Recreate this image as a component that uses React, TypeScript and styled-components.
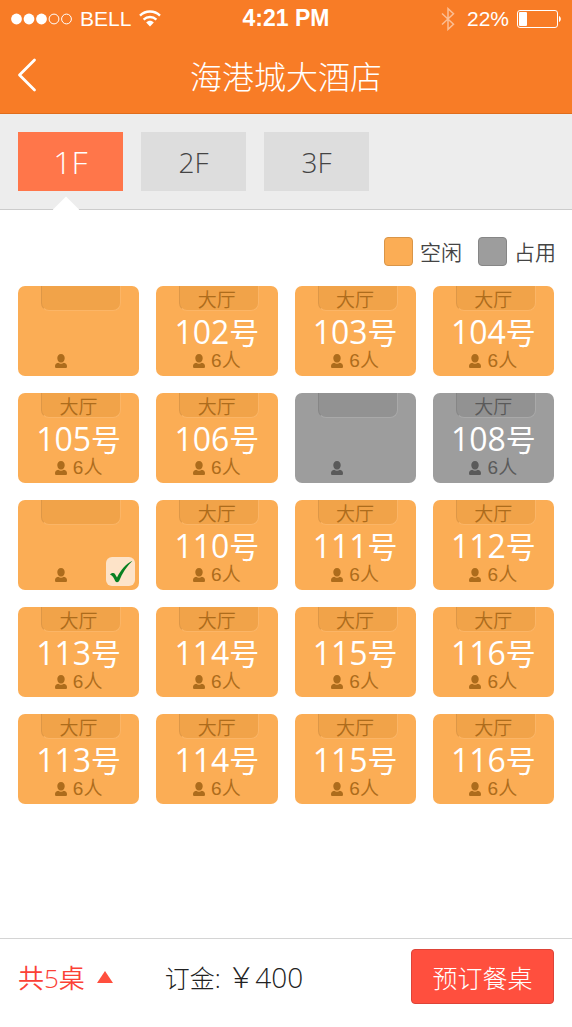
import React, { useState } from 'react';
import styled, { createGlobalStyle } from 'styled-components';

const GlobalStyle = createGlobalStyle`
  * { box-sizing: border-box; }
  body {
    margin: 0;
    background: #fff;
    color: #444;
    font-family: "Open Sans", "Noto Sans CJK SC", sans-serif;
    font-weight: 350;
  }
  button {
    margin: 0;
    padding: 0;
    border: 0;
    background: none;
    color: inherit;
    font: inherit;
    cursor: pointer;
  }
`;

const Page = styled.div`
  display: flex;
  flex-direction: column;
  min-height: 100vh;
`;

const Header = styled.header`
  background: #f87c26;
  border-bottom: 1px solid #e06d1c;
  color: #fff;
`;

const StatusBar = styled.div`
  display: grid;
  grid-template-columns: 1fr auto 1fr;
  align-items: center;
  height: 37px;
  padding: 0 11px;
  font-family: "Liberation Sans", sans-serif;
  font-size: 21px;
`;

const StatusGroup = styled.div<{ $end?: boolean }>`
  display: flex;
  align-items: center;
  justify-content: ${(p) => (p.$end ? 'flex-end' : 'flex-start')};
  gap: 8px;
`;

const Clock = styled.time`
  font-size: 23px;
  font-weight: 700;
`;

const TitleBar = styled.div`
  display: grid;
  grid-template-columns: 54px 1fr 54px;
  align-items: center;
  height: 76px;
`;

const BackButton = styled.button`
  display: flex;
  align-items: center;
  height: 76px;
  padding-left: 17px;
`;

const Title = styled.h1`
  margin: 0;
  text-align: center;
  font-family: "Noto Sans CJK SC", sans-serif;
  font-size: 32px;
  font-weight: 300;
  line-height: 40px;
`;

const Floors = styled.div`
  display: flex;
  gap: 18px;
  padding: 18px;
  background: #ededed;
  border-bottom: 1px solid #ccc;
`;

const FloorTab = styled.button<{ $active: boolean }>`
  position: relative;
  width: 105px;
  height: 59px;
  background: ${(p) => (p.$active ? '#ff764a' : '#dddddd')};
  color: ${(p) => (p.$active ? '#fff' : '#444')};
  font-size: ${(p) => (p.$active ? 32 : 28)}px;
  font-weight: 300;
`;

const Pointer = styled.svg`
  position: absolute;
  left: 35px;
  bottom: -19px;
`;

const Main = styled.main`
  flex: 1;
`;

const Legend = styled.div`
  display: flex;
  justify-content: flex-end;
  gap: 16px;
  padding: 27px 16px 20px;
`;

const LegendItem = styled.div`
  display: flex;
  align-items: center;
  gap: 7px;
  font-family: "Noto Sans CJK SC", sans-serif;
  font-size: 21px;
  line-height: 29px;
`;

const Swatch = styled.span<{ $busy?: boolean }>`
  width: 29px;
  height: 29px;
  border: 1px solid ${(p) => (p.$busy ? '#868686' : '#d99548')};
  border-radius: 4px;
  background: ${(p) => (p.$busy ? '#9d9d9d' : '#fbad55')};
`;

const Grid = styled.div`
  display: grid;
  grid-template-columns: repeat(4, 1fr);
  gap: 17px;
  padding: 0 18px;
`;

const TableCard = styled.button<{ $busy: boolean }>`
  position: relative;
  display: flex;
  flex-direction: column;
  align-items: center;
  height: 90px;
  border-radius: 7px;
  background: ${(p) => (p.$busy ? '#9d9d9d' : '#fbad55')};
  color: ${(p) => (p.$busy ? '#5a5a5a' : '#ad6c1c')};
`;

const Area = styled.span<{ $busy: boolean }>`
  width: 80px;
  height: 25px;
  margin-left: 5px;
  padding-right: 5px;
  border: 1px solid ${(p) => (p.$busy ? '#a9a9a9' : '#fbb566')};
  border-top: 0;
  border-left-color: ${(p) => (p.$busy ? '#868686' : '#dd9747')};
  border-radius: 0 0 8px 8px;
  background: ${(p) => (p.$busy ? '#929292' : '#f1a349')};
  font-family: "Noto Sans CJK SC", sans-serif;
  font-size: 19px;
  line-height: 26px;
`;

const TableNumber = styled.span`
  height: 40px;
  color: #fff;
  font-size: 32px;
  font-weight: 400;
  line-height: 42px;
  white-space: nowrap;
`;

const NumberUnit = styled.span`
  font-size: 30px;
  line-height: 32px;
`;

const Seats = styled.span`
  display: flex;
  align-items: center;
  gap: 6px;
  height: 20px;
  font-family: "Liberation Sans", "Noto Sans CJK SC", sans-serif;
  font-size: 19px;
  line-height: 20px;
`;

const SeatCount = styled.span`
  min-width: 30px;
`;

const CheckBadge = styled.span`
  position: absolute;
  right: 4px;
  bottom: 4px;
  width: 29px;
  height: 29px;
  border-radius: 6px;
  background: #fde3c8;
`;

const Footer = styled.footer`
  display: flex;
  align-items: center;
  height: 89px;
  padding: 0 18px 13px;
  border-top: 1px solid #d4d4d4;
  font-size: 25px;
`;

const CountButton = styled.button`
  display: flex;
  align-items: center;
  gap: 12px;
  color: #fb4136;
  font-size: 26px;
`;

const Deposit = styled.span`
  margin-left: 52px;
  color: #222;
  font-weight: 300;
  white-space: pre;
`;

const Amount = styled.span`
  font-size: 28px;
  line-height: 32px;
`;

const BookButton = styled.button`
  width: 143px;
  height: 55px;
  margin-left: auto;
  border: 1px solid #dd4438;
  border-radius: 4px;
  background: #ff4f3e;
  color: #fff;
  font-weight: 300;
`;

const SignalDots = () => (
  <svg width="61" height="12" viewBox="0 0 61 12" aria-hidden="true">
    {[5.5, 18, 30.5].map((x) => (
      <circle key={x} cx={x} cy="6" r="5.4" fill="#fff" />
    ))}
    {[43, 55.5].map((x) => (
      <circle key={x} cx={x} cy="6" r="4.9" fill="none" stroke="#fff" />
    ))}
  </svg>
);

const Wifi = () => (
  <svg width="22" height="17" viewBox="0 0 22 17" aria-hidden="true">
    <g fill="none" stroke="#fff" strokeWidth="2.4">
      <path d="M1 5.6C6.6.2 15.4.2 21 5.6" />
      <path d="M4.6 9.6C8.2 6.2 13.8 6.2 17.4 9.6" />
    </g>
    <path d="M7.2 12.4C9.3 10.2 12.7 10.2 14.8 12.4L11 16.4Z" fill="#fff" />
  </svg>
);

const Bluetooth = () => (
  <svg width="18" height="24" viewBox="0 0 18 24" aria-hidden="true">
    <path d="M1 6.5L12.5 17.2L7 22.4V1.6L12.5 6.8L1 17.5" fill="none" stroke="#fff" strokeOpacity=".5" strokeWidth="1.5" />
  </svg>
);

const Battery = () => (
  <svg width="44" height="18" viewBox="0 0 44 18" aria-hidden="true">
    <rect x=".5" y=".5" width="40" height="17" rx="2.5" fill="none" stroke="#fff" />
    <rect x="2" y="2" width="8" height="14" rx="1" fill="#fff" />
    <path d="M42 6c2.4 1 2.4 5 0 6z" fill="#fff" />
  </svg>
);

const Person = () => (
  <svg width="12" height="14" viewBox="0 0 12 14" aria-hidden="true" fill="currentColor">
    <path d="M6 0C8.3 0 9.7 1.7 9.7 4C9.7 5.8 9 7.2 8 8C7 8.8 5 8.8 4 8C3 7.2 2.3 5.8 2.3 4C2.3 1.7 3.7 0 6 0Z" />
    <path d="M3.2 8.7C5 10 7 10 8.8 8.7C11 9.1 12 10.4 12 12.2C12 13.5 11.5 14 10.5 14H1.5C.5 14 0 13.5 0 12.2C0 10.4 1 9.1 3.2 8.7Z" />
  </svg>
);

const Check = () => (
  <svg width="29" height="29" viewBox="0 0 29 29" aria-hidden="true">
    <path d="M4 17.5C6 15.5 8 15.6 8.8 16.8L11 20.5C15 12.5 20 7 26.5 3.8C20.5 9.5 16.5 16 13 24.2C11.5 25.5 10.5 25.6 9.3 24.2C8 21 6.5 18.3 4 17.5Z" fill="#078022" />
  </svg>
);

type Table = { no?: string; busy?: boolean };

const tables: Table[] = [
  {}, { no: '102' }, { no: '103' }, { no: '104' },
  { no: '105' }, { no: '106' }, { busy: true }, { no: '108', busy: true },
  {}, { no: '110' }, { no: '111' }, { no: '112' },
  { no: '113' }, { no: '114' }, { no: '115' }, { no: '116' },
  { no: '113' }, { no: '114' }, { no: '115' }, { no: '116' },
];

export default function App() {
  const [floor, setFloor] = useState('1F');
  const [selected, setSelected] = useState(8);

  return (
    <Page>
      <GlobalStyle />
      <Header>
        <StatusBar>
          <StatusGroup>
            <SignalDots />
            <span>BELL</span>
            <Wifi />
          </StatusGroup>
          <Clock>4:21 PM</Clock>
          <StatusGroup $end>
            <Bluetooth />
            <span>22%</span>
            <Battery />
          </StatusGroup>
        </StatusBar>
        <TitleBar>
          <BackButton aria-label="返回">
            <svg width="20" height="34" viewBox="0 0 20 34" aria-hidden="true">
              <path d="M17.5 2L2.5 17L17.5 32" fill="none" stroke="#fff" strokeWidth="2.8" strokeLinecap="round" strokeLinejoin="round" />
            </svg>
          </BackButton>
          <Title>海港城大酒店</Title>
        </TitleBar>
      </Header>

      <Floors role="tablist">
        {['1F', '2F', '3F'].map((name) => (
          <FloorTab key={name} role="tab" aria-selected={floor === name} $active={floor === name} onClick={() => setFloor(name)}>
            {name}
            {floor === name && (
              <Pointer width="26" height="14" viewBox="0 0 26 14" aria-hidden="true">
                <path d="M0 13.5L13 .5L26 13.5V14H0Z" fill="#fff" />
              </Pointer>
            )}
          </FloorTab>
        ))}
      </Floors>

      <Main>
        <Legend>
          <LegendItem><Swatch />空闲</LegendItem>
          <LegendItem><Swatch $busy />占用</LegendItem>
        </Legend>
        <Grid>
          {tables.map(({ no, busy = false }, i) => (
            <TableCard key={i} $busy={busy} disabled={busy} aria-pressed={selected === i} onClick={() => setSelected(i)}>
              <Area $busy={busy}>{no && '大厅'}</Area>
              <TableNumber>
                {no}
                {no && <NumberUnit>号</NumberUnit>}
              </TableNumber>
              <Seats>
                <Person />
                <SeatCount>{no && '6人'}</SeatCount>
              </Seats>
              {selected === i && <CheckBadge><Check /></CheckBadge>}
            </TableCard>
          ))}
        </Grid>
      </Main>

      <Footer>
        <CountButton>
          共5桌
          <svg width="16" height="12" viewBox="0 0 16 12" aria-hidden="true">
            <path d="M8 0L16 12H0Z" fill="#ff4f3e" />
          </svg>
        </CountButton>
        <Deposit>订金: <Amount>￥400</Amount></Deposit>
        <BookButton>预订餐桌</BookButton>
      </Footer>
    </Page>
  );
}
